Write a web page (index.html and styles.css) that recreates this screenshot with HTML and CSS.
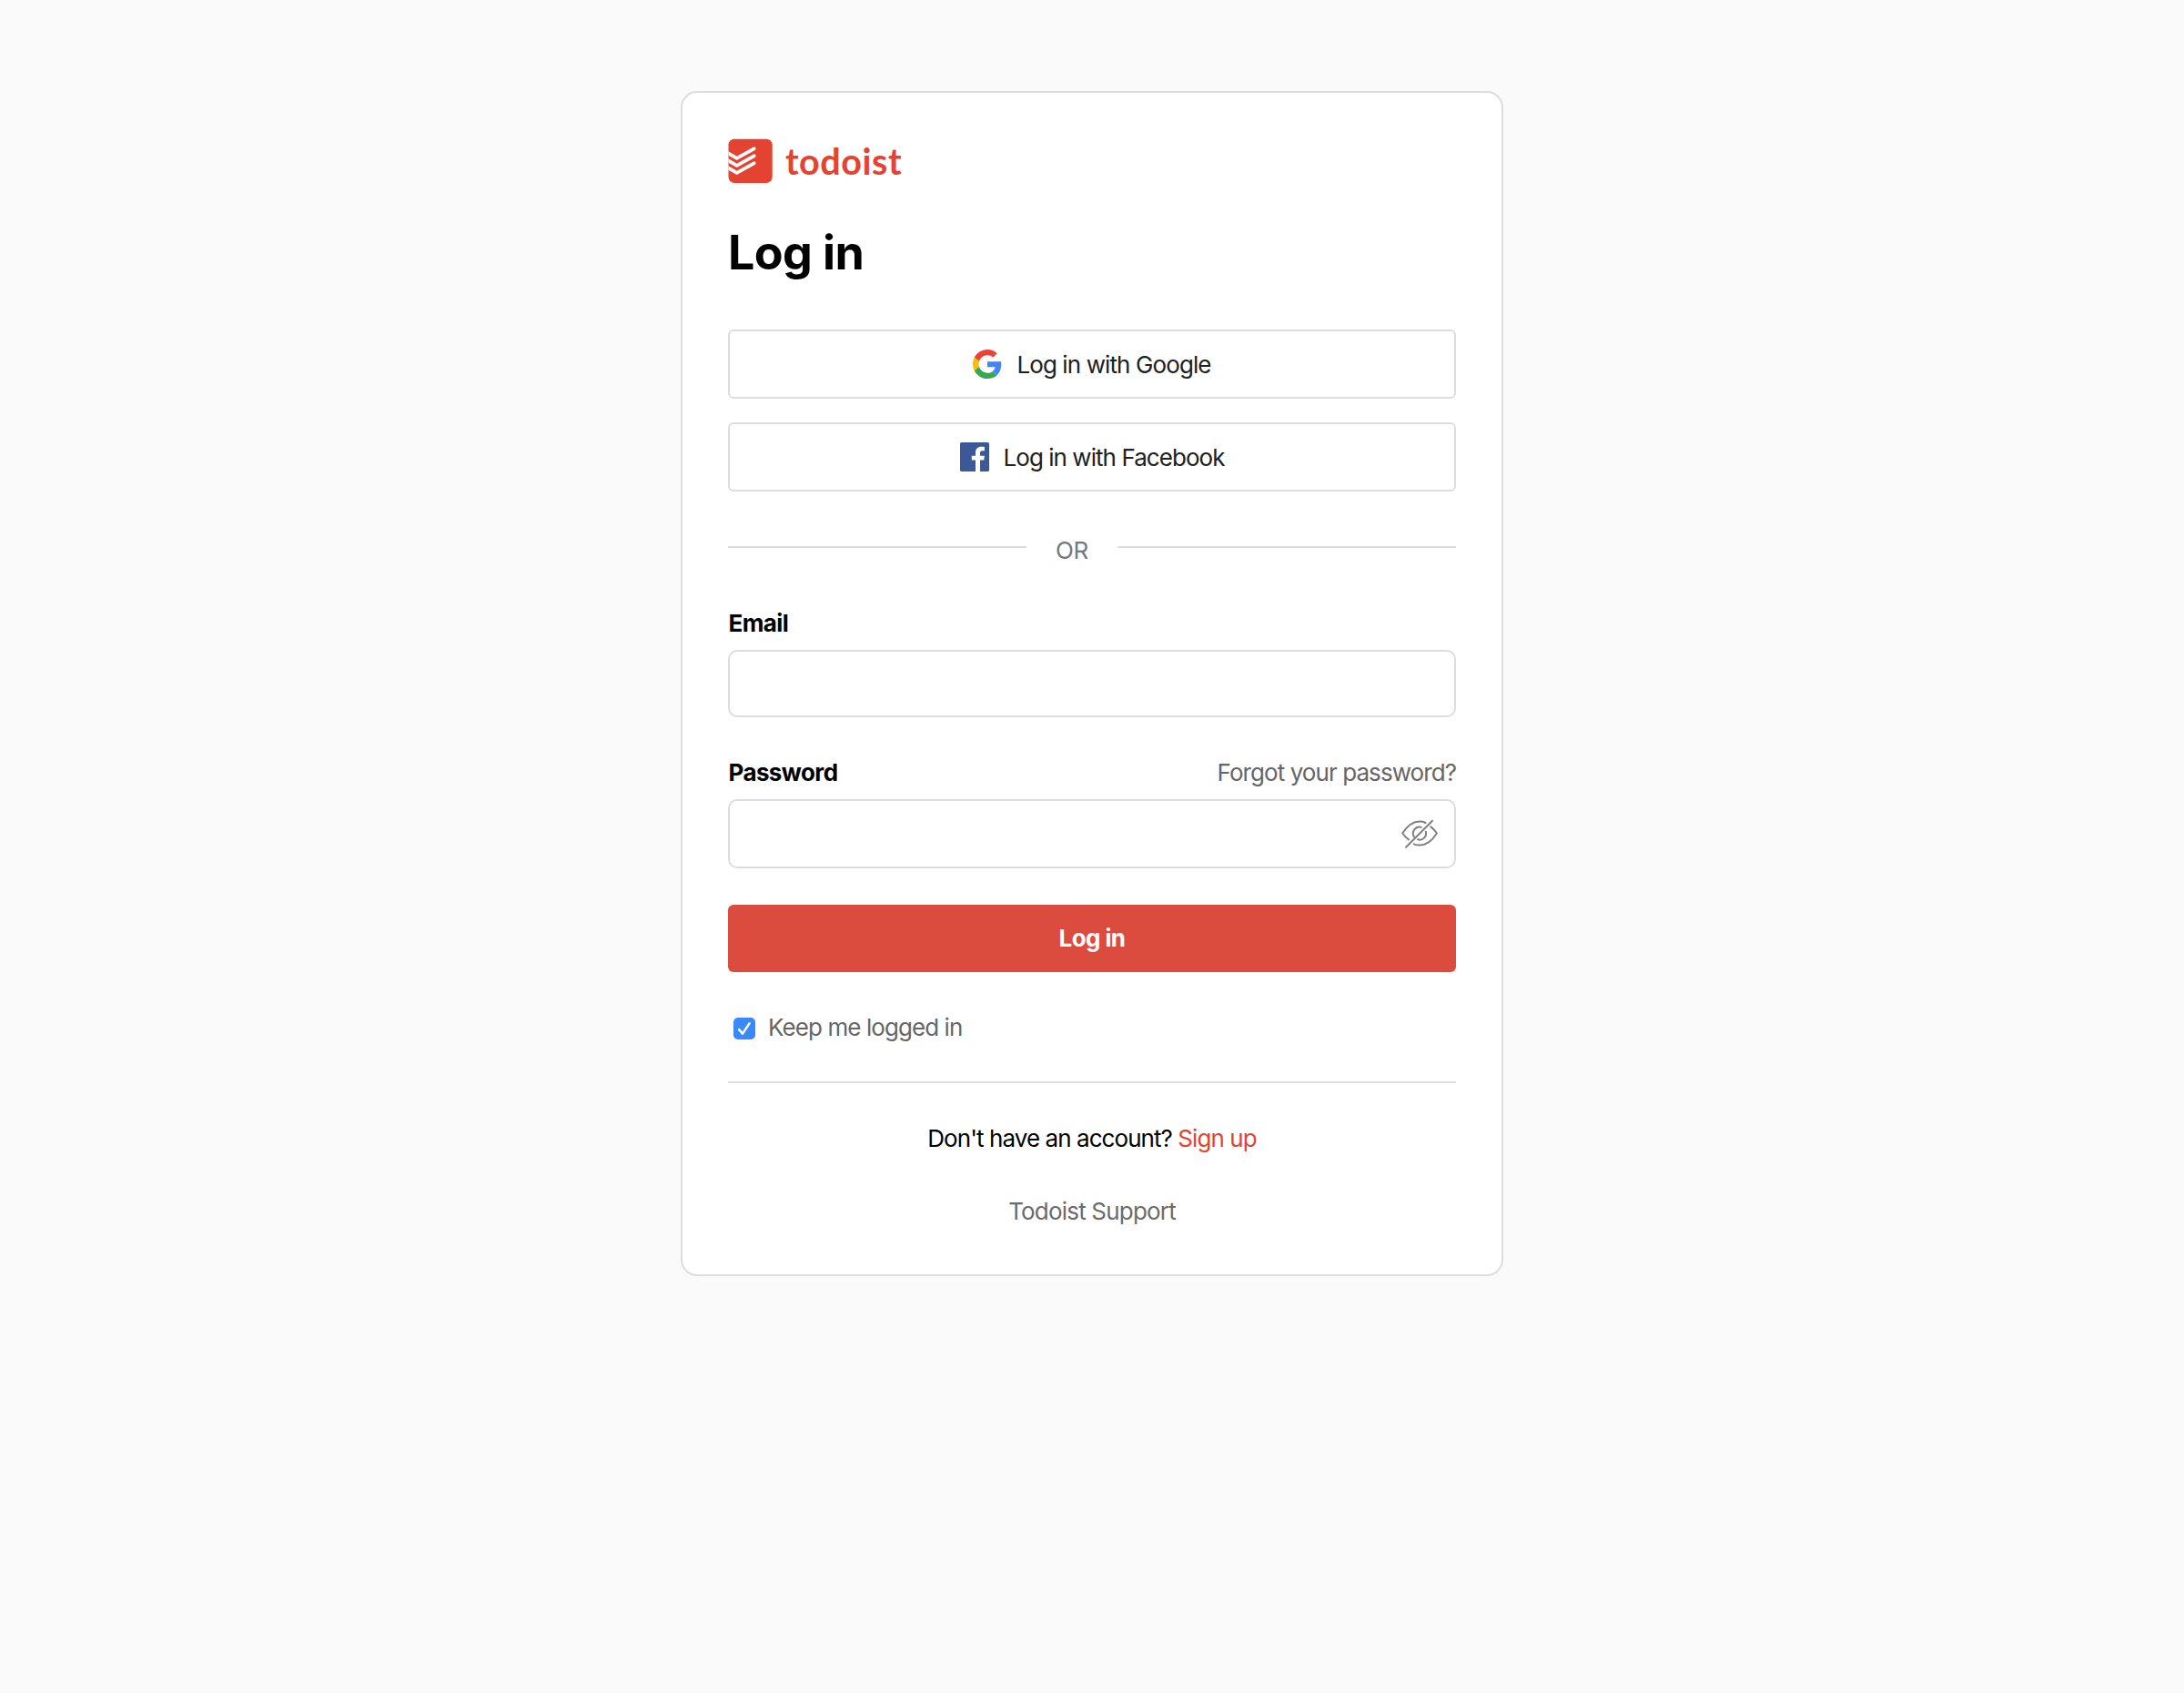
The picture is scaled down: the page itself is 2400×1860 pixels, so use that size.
FILE: index.html
```html
<!DOCTYPE html>
<html lang="en">
<head>
<meta charset="utf-8">
<title>Log in – Todoist</title>
<link rel="stylesheet" href="styles.css">
</head>
<body>
<main class="card">
  <div class="logo">
    <svg width="49" height="49" viewBox="0 0 49 49">
      <defs><clipPath id="tile"><rect x=".5" y=".7" width="48.2" height="48.2" rx="6.5"/></clipPath></defs>
      <g clip-path="url(#tile)">
        <rect width="49" height="49" fill="#e44332"/>
        <g fill="none" stroke="#fff" stroke-width="3.8" stroke-linecap="round" stroke-linejoin="round">
          <path d="M-1 15.7L9.7 21.9L28.6 11.3"/>
          <path d="M-1 23.7L9.7 29.9L28.6 19.3"/>
          <path d="M-1 31.7L9.7 37.9L28.6 27.3"/>
        </g>
      </g>
    </svg>
    <span class="wordmark">todoist</span>
  </div>

  <h1 class="title">Log in</h1>

  <div class="social">
    <button class="social-btn google" type="button">
      <svg width="32" height="32" viewBox="0 0 48 48">
        <path fill="#ea4335" d="M24 9.5c3.54 0 6.71 1.22 9.21 3.6l6.85-6.85C35.9 2.38 30.47 0 24 0 14.62 0 6.51 5.38 2.56 13.22l7.98 6.19C12.43 13.72 17.74 9.5 24 9.5z"/>
        <path fill="#4285f4" d="M46.98 24.55c0-1.57-.15-3.09-.38-4.55H24v9.02h12.94c-.58 2.96-2.26 5.48-4.78 7.18l7.73 6c4.51-4.18 7.09-10.36 7.09-17.65z"/>
        <path fill="#fbbc05" d="M10.53 28.59c-.48-1.45-.76-2.99-.76-4.59s.27-3.14.76-4.59l-7.98-6.19C.92 16.46 0 20.12 0 24c0 3.88.92 7.54 2.56 10.78l7.97-6.19z"/>
        <path fill="#34a853" d="M24 48c6.48 0 11.93-2.13 15.89-5.81l-7.73-6c-2.15 1.45-4.92 2.3-8.16 2.3-6.26 0-11.57-4.22-13.47-9.91l-7.98 6.19C6.51 42.62 14.62 48 24 48z"/>
      </svg>
      <span>Log in with Google</span>
    </button>
    <button class="social-btn facebook" type="button">
      <svg width="32" height="32" viewBox="0 0 32 32">
        <rect width="32" height="32" rx="1.6" fill="#3b5998"/>
        <path fill="#fff" d="M22 32V19.6h4.3l.6-4.8H22v-3.1c0-1.4.4-2.4 2.4-2.4H27V5c-.5-.1-2-.2-3.7-.2-3.8 0-6.3 2.3-6.3 6.4v3.6h-4.2v4.8H17V32z"/>
      </svg>
      <span>Log in with Facebook</span>
    </button>
  </div>

  <div class="divider"><span class="rule"></span><span class="or">OR</span><span class="rule"></span></div>

  <form class="form">
    <label class="label" for="email">Email</label>
    <div class="field email-field"><input class="input" id="email" type="email"></div>

    <div class="label-row">
      <label class="label" for="password">Password</label>
      <a class="forgot">Forgot your password?</a>
    </div>
    <div class="field password-field">
      <input class="input" id="password" type="password">
      <svg width="40" height="34" viewBox="0 -0.7 40 34" fill="none" stroke="#808080" stroke-width="2" stroke-linecap="round" stroke-linejoin="round">
        <path d="M8 22.7C5 20.5 2.6 17.8 1.2 15.8C5 10 12 2.9 20 2.9C22.5 2.9 24.6 3.4 26.5 4.3"/>
        <path d="M32.3 8.7C35 10.8 37.4 13.4 38.9 15.8C35 22 28 28.9 20 28.9C17.7 28.9 15.7 28.5 13.8 27.6"/>
        <path d="M14 19.8A7 7 0 0 1 21.8 9.2"/>
        <path d="M26.8 14A7 7 0 0 1 18 22.6"/>
        <path d="M5 31L34 2"/>
      </svg>
    </div>

    <button class="submit" type="button">Log in</button>

    <label class="keep">
      <svg class="check" width="24" height="24" viewBox="0 0 24 24">
        <rect width="24" height="24" rx="5" fill="#3b88fd"/>
        <path d="M6.2 13.2L10 17.6L17.5 6.4" fill="none" stroke="#fff" stroke-width="2.6" stroke-linecap="round" stroke-linejoin="round"/>
      </svg>
      <span>Keep me logged in</span>
    </label>
  </form>

  <div class="separator"></div>
  <p class="signup">Don't have an account? <a class="signup-link">Sign up</a></p>
  <p class="support">Todoist Support</p>
</main>
</body>
</html>
```
FILE: styles.css
```css
* {
  box-sizing: border-box;
}

body {
  margin: 0;
  padding-top: 100px;
  background: #fafafa;
  color: #000;
  font: 400 26px/31px Inter, sans-serif;
  letter-spacing: -0.93px;
}

.card {
  display: flex;
  flex-direction: column;
  width: 904px;
  margin: 0 auto;
  padding: 50px 50px 54px;
  background: #fff;
  border: 2px solid #ddd;
  border-radius: 18px;
}

.logo {
  display: flex;
  gap: 14px;
  height: 49px;
}

.wordmark {
  color: #e44332;
  font: 700 39.5px/49px Lato, sans-serif;
  letter-spacing: 0.54px;
}

.title {
  margin: 47px 0 54px;
  font-size: 52px;
  font-weight: 700;
  line-height: 60px;
  letter-spacing: -0.6px;
}

.social {
  display: flex;
  flex-direction: column;
  gap: 26px;
}

.social-btn {
  display: flex;
  align-items: center;
  justify-content: center;
  gap: 16px;
  height: 76px;
  padding: 0;
  background: #fff;
  border: 2px solid #ddd;
  border-radius: 6px;
  color: #202020;
  font: inherit;
  letter-spacing: -0.89px;
}

.social-btn span {
  padding-top: 1px;
}

.facebook {
  letter-spacing: -0.95px;
}

.divider {
  display: grid;
  grid-template-columns: 328px 100px 1fr;
  margin: 49px 0;
}

.rule {
  height: 2px;
  margin-top: 11px;
  background: #ddd;
}

.or {
  color: #777;
  text-align: center;
  letter-spacing: -0.4px;
}

.form {
  display: flex;
  flex-direction: column;
}

.label {
  padding-left: 0.5px;
  font-weight: 700;
  letter-spacing: -0.6px;
}

.label-row {
  display: flex;
  justify-content: space-between;
  margin-top: 45px;
}

.forgot {
  color: #666;
}

.field {
  display: flex;
  align-items: center;
  margin-top: 14px;
  background: #fff;
  border: 2px solid #ddd;
  border-radius: 10px;
}

.email-field {
  height: 74px;
}

.password-field {
  height: 76px;
  padding-right: 18px;
}

.input {
  flex: 1;
  height: 100%;
  padding: 0 18px;
  background: none;
  border: 0;
  outline: 0;
  font: inherit;
}

.submit {
  height: 74px;
  margin: 40px 0 45px;
  padding: 0 0 1px;
  background: #db4c3f;
  border: 0;
  border-radius: 6px;
  color: #fff;
  font: inherit;
  font-weight: 700;
  letter-spacing: -0.6px;
}

.keep {
  display: flex;
  gap: 14px;
  padding-left: 6px;
  color: #666;
  letter-spacing: -0.92px;
}

.check {
  margin-top: 5px;
}

.separator {
  height: 2px;
  margin: 44px 0 45px;
  background: #ddd;
}

.signup,
.support {
  margin: 0;
  text-align: center;
}

.signup-link {
  color: #e44332;
}

.support {
  margin-top: 49px;
  color: #6b6b6b;
  letter-spacing: -0.81px;
}
```
